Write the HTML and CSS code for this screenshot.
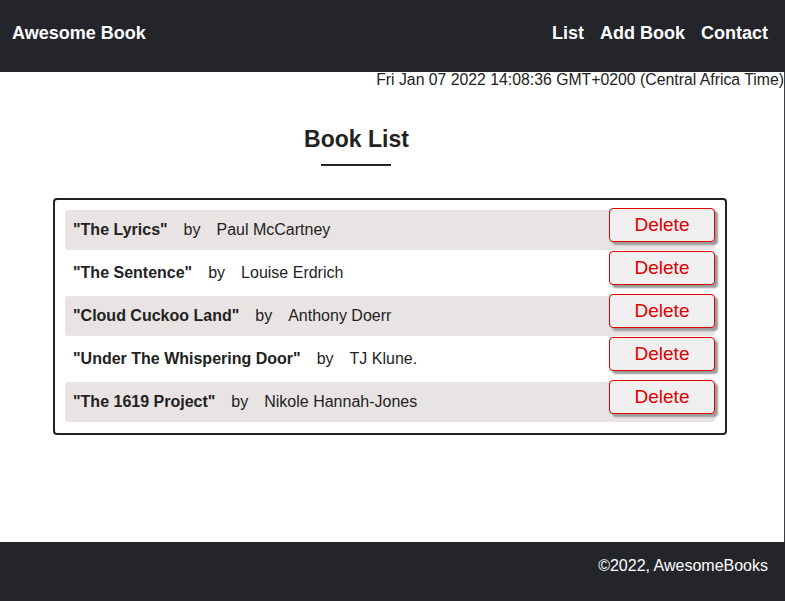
FILE: index.html
```html
<!DOCTYPE html>
<html lang="en">
<head>
<meta charset="utf-8">
<title>Awesome Books</title>
<link rel="stylesheet" href="styles.css">
</head>
<body>
<header class="topbar">
  <h1 class="brand">Awesome Book</h1>
  <nav class="nav">
    <a class="nav-link" href="#">List</a>
    <a class="nav-link" href="#">Add Book</a>
    <a class="nav-link" href="#">Contact</a>
  </nav>
</header>
<main class="main">
  <p class="date">Fri Jan 07 2022 14:08:36 GMT+0200 (Central Africa Time)</p>
  <section class="list-section">
    <h2 class="section-title">Book List</h2>
    <div class="title-rule"></div>
  </section>
  <div class="book-box">
    <div class="book-row shaded">
      <span class="book-title">"The Lyrics"</span>
      <span class="book-by">by</span>
      <span class="book-author">Paul McCartney</span>
      <button class="delete-btn">Delete</button>
    </div>
    <div class="book-row">
      <span class="book-title">"The Sentence"</span>
      <span class="book-by">by</span>
      <span class="book-author">Louise Erdrich</span>
      <button class="delete-btn">Delete</button>
    </div>
    <div class="book-row shaded">
      <span class="book-title">"Cloud Cuckoo Land"</span>
      <span class="book-by">by</span>
      <span class="book-author">Anthony Doerr</span>
      <button class="delete-btn">Delete</button>
    </div>
    <div class="book-row">
      <span class="book-title">"Under The Whispering Door"</span>
      <span class="book-by">by</span>
      <span class="book-author">TJ Klune.</span>
      <button class="delete-btn">Delete</button>
    </div>
    <div class="book-row shaded">
      <span class="book-title">"The 1619 Project"</span>
      <span class="book-by">by</span>
      <span class="book-author">Nikole Hannah-Jones</span>
      <button class="delete-btn">Delete</button>
    </div>
  </div>
</main>
<footer class="footer">
  <p class="copy">©2022, AwesomeBooks</p>
</footer>
</body>
</html>
```

FILE: styles.css
```css
* { box-sizing: border-box; }

html, body {
  margin: 0;
  height: 100%;
}

body {
  display: flex;
  flex-direction: column;
  font-family: "Liberation Sans", Arial, sans-serif;
  color: #222;
  background: #fff;
}

.topbar {
  height: 72px;
  flex: 0 0 72px;
  background: #24252a;
  display: flex;
  justify-content: space-between;
  align-items: flex-start;
  padding: 23px 17px 0 12px;
}

.brand {
  margin: 0;
  font-size: 18px;
  font-weight: bold;
  line-height: 21px;
  color: #fff;
}

.nav {
  display: flex;
  gap: 16px;
}

.nav-link {
  color: #fff;
  text-decoration: none;
  font-size: 18px;
  font-weight: bold;
  line-height: 21px;
}

.main {
  flex: 1 1 auto;
  border-right: 1px solid #3c3d42;
  display: flex;
  flex-direction: column;
}

.date {
  margin: 0;
  text-align: right;
  font-size: 15.8px;
  line-height: 16px;
  color: #222;
}

.list-section {
  width: 713px;
  margin-top: 38px;
  text-align: center;
}

.section-title {
  margin: 0;
  font-size: 23px;
  font-weight: bold;
  line-height: 26px;
  color: #222;
}

.title-rule {
  width: 70px;
  height: 2px;
  background: #24252a;
  margin: 12px 0 0 321px;
}

.book-box {
  margin: 32px 0 0 53px;
  width: 674px;
  border: 2px solid #222;
  border-radius: 4px;
  padding: 10px 10px 11px;
  display: flex;
  flex-direction: column;
  gap: 3px;
}

.book-row {
  height: 40px;
  display: flex;
  align-items: center;
  gap: 16px;
  padding-left: 8px;
  border-radius: 3px;
}

.book-row.shaded {
  background: #e8e4e3;
}

.book-title {
  font-weight: bold;
  font-size: 16px;
  color: #222;
}

.book-by,
.book-author {
  font-size: 16px;
  color: #222;
}

.delete-btn {
  margin-left: auto;
  align-self: flex-start;
  margin-top: -2px;
  width: 106px;
  height: 34px;
  background: #efefef;
  border: 1px solid #e00000;
  border-radius: 4px;
  color: #e00000;
  font-family: "Liberation Sans", Arial, sans-serif;
  font-size: 19px;
  padding: 0;
  box-shadow: 3px 3px 2px #9a9a9a;
}

.footer {
  flex: 0 0 59px;
  height: 59px;
  background: #24252a;
  padding: 15px 17px 0;
}

.copy {
  margin: 0;
  text-align: right;
  color: #fff;
  font-size: 16px;
  line-height: 18px;
}
```
